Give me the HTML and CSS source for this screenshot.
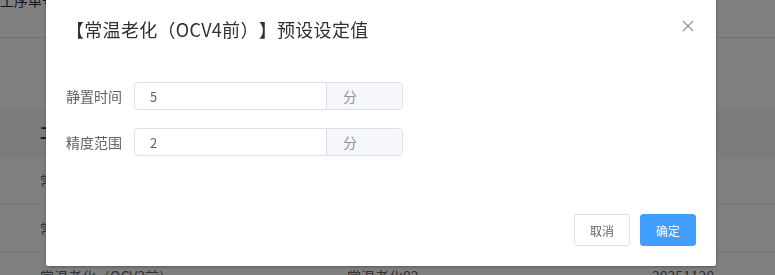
FILE: index.html
```html
<!DOCTYPE html>
<html lang="zh-CN">
<head>
  <meta charset="UTF-8" />
  <title>预设设定值</title>
  <link rel="stylesheet" href="styles.css">
</head>
<body>
  <div class="page">
    <div class="toolbar">
      <span class="toolbar-label">工序单号</span>
    </div>

    <div class="table">
      <div class="row head">
        <div>工序名称</div>
        <div>工序代码</div>
        <div>生效日期</div>
      </div>
      <div class="row">
        <div>常温老化（OCV1前）</div>
        <div>常温老化00</div>
        <div>20251120</div>
      </div>
      <div class="row">
        <div>常温老化（OCV2前）</div>
        <div>常温老化01</div>
        <div>20251120</div>
      </div>
      <div class="row">
        <div>常温老化（OCV3前）</div>
        <div>常温老化02</div>
        <div>20251120</div>
      </div>
    </div>
  </div>

  <div class="overlay"></div>

  <div class="dialog">
    <div class="dialog-header">
      <span class="dialog-title">【常温老化（OCV4前）】预设设定值</span>
      <button class="dialog-close" aria-label="关闭">
        <svg width="16" height="16" viewBox="0 0 16 16">
          <path d="M3 3 L13 13 M13 3 L3 13" stroke="#909399" stroke-width="1.2" fill="none" />
        </svg>
      </button>
    </div>

    <div class="dialog-body">
      <div class="form-item">
        <label class="form-label">静置时间</label>
        <div class="input-group">
          <input class="input" type="text" value="5">
          <div class="input-append">分</div>
        </div>
      </div>
      <div class="form-item">
        <label class="form-label">精度范围</label>
        <div class="input-group">
          <input class="input" type="text" value="2">
          <div class="input-append">分</div>
        </div>
      </div>
    </div>

    <div class="dialog-footer">
      <button class="btn">取消</button>
      <button class="btn primary">确定</button>
    </div>
  </div>
</body>
</html>
```

FILE: styles.css
```css
* {
  box-sizing: border-box;
}

body {
  margin: 0;
  font-family: "Noto Sans CJK SC", "Noto Sans", sans-serif;
  font-size: 14px;
  color: #606266;
  background-color: #ffffff;
  overflow: hidden;
  text-spacing-trim: space-all;
}

.page {
  height: 275px;
  overflow: hidden;
}

.toolbar {
  height: 50px;
  margin-top: -12px;
  border-bottom: 1px solid #dcdfe6;
}

.toolbar-label {
  display: inline-block;
  line-height: 24px;
  color: #303133;
}

.table {
  margin-top: 70px;
}

.row {
  display: grid;
  grid-template-columns: 307px 305px 1fr;
  padding-left: 40px;
  height: 48px;
  align-items: center;
  border-bottom: 1px solid #ebeef5;
  color: #606266;
}

.row.head {
  background-color: #f5f7fa;
  color: #303133;
  font-weight: bold;
}

.overlay {
  position: fixed;
  inset: 0;
  background-color: rgba(0, 0, 0, 0.5);
}

.dialog {
  position: absolute;
  top: -3px;
  left: 46px;
  width: 670px;
  background-color: #ffffff;
  border-radius: 2px;
  box-shadow: 0 1px 3px rgba(0, 0, 0, 0.3);
}

.dialog-header {
  padding: 20px 20px 10px;
}

.dialog-title {
  display: block;
  font-size: 18px;
  line-height: 24px;
  letter-spacing: 0.3px;
  color: #303133;
  text-spacing-trim: space-all;
}

.dialog-close {
  position: absolute;
  top: 21px;
  right: 20px;
  width: 16px;
  height: 16px;
  padding: 0;
  border: none;
  background: none;
  cursor: pointer;
}

.dialog-close svg {
  display: block;
}

.dialog-body {
  padding: 31px 20px 30px;
}

.form-item {
  display: flex;
  align-items: center;
  margin-bottom: 18px;
}

.form-label {
  padding-right: 12px;
  line-height: 28px;
  font-size: 14px;
  color: #606266;
}

.input-group {
  display: flex;
  width: 269px;
  height: 28px;
  border: 1px solid #dcdfe6;
  border-radius: 4px;
  overflow: hidden;
}

.input {
  flex: 1;
  min-width: 0;
  border: none;
  outline: none;
  padding: 0 15px;
  font-family: inherit;
  font-size: 13px;
  color: #606266;
  background: none;
}

.input-append {
  width: 76px;
  padding-left: 16px;
  line-height: 26px;
  font-size: 14px;
  color: #909399;
  background-color: #f5f7fa;
  border-left: 1px solid #dcdfe6;
}

.dialog-footer {
  display: flex;
  justify-content: flex-end;
  gap: 10px;
  padding: 10px 20px 20px;
}

.btn {
  height: 32px;
  padding: 0 15px;
  font-family: inherit;
  font-size: 12px;
  color: #606266;
  background-color: #ffffff;
  border: 1px solid #dcdfe6;
  border-radius: 3px;
  cursor: pointer;
}

.btn.primary {
  color: #ffffff;
  background-color: #409eff;
  border-color: #409eff;
}
```
